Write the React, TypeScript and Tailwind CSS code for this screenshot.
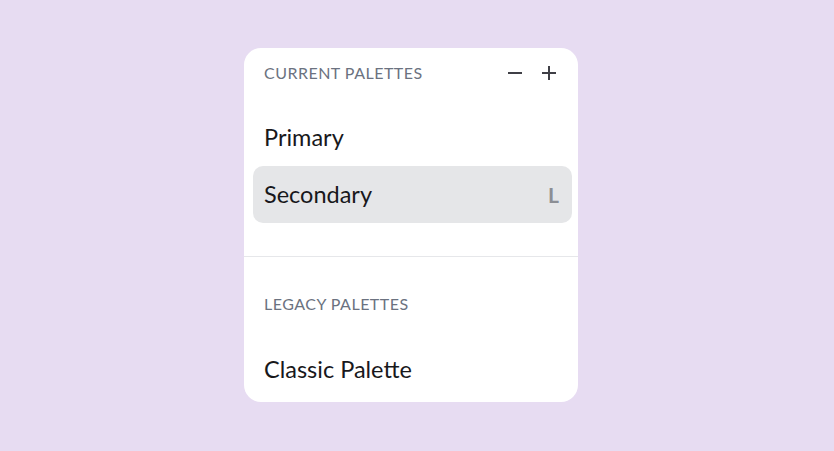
export default function App() {
    return (
        <div className="w-[834px] h-[451px] bg-[#e7dcf2] flex items-start pl-[244px] pt-[48px]" style={{ fontFamily: 'Lato, "Noto Sans", sans-serif' }}>
            <div className="w-[334px] bg-white rounded-[17px] pl-[9px] pr-[6px] flex flex-col">
                <div className="h-[50px] flex items-center justify-between pl-[11px] pr-[16px]">
                    <span className="text-[16px] text-[#6b7280] tracking-[0.03em]">CURRENT PALETTES</span>
                    <div className="flex items-center gap-[20px] text-[#3f3f46]">
                        <svg width="14" height="14" viewBox="0 0 14 14"><path d="M0 7h14" stroke="currentColor" strokeWidth="2" /></svg>
                        <svg width="14" height="14" viewBox="0 0 14 14"><path d="M0 7h14M7 0v14" stroke="currentColor" strokeWidth="2" /></svg>
                    </div>
                </div>
                <div className="mt-[11px] h-[57px] flex items-center px-[11px] text-[23.5px] text-[#18181b]">Primary</div>
                <div className="h-[57px] flex items-center justify-between pl-[11px] pr-[13px] rounded-[10px] bg-[#e5e6e8] text-[23.5px] text-[#18181b]">
                    <span>Secondary</span>
                    <span className="text-[21px] font-bold text-[#8b8e94]">L</span>
                </div>
                <div className="mt-[33px] -ml-[9px] -mr-[6px] h-px bg-[#e6e7ea]"></div>
                <div className="mt-[22px] h-[50px] flex items-center px-[11px]">
                    <span className="text-[16px] text-[#6b7280] tracking-[0.03em]">LEGACY PALETTES</span>
                </div>
                <div className="mt-[12px] mb-[4px] h-[57px] flex items-center px-[11px] text-[23.5px] text-[#18181b]">Classic Palette</div>
            </div>
        </div>
    );
}
